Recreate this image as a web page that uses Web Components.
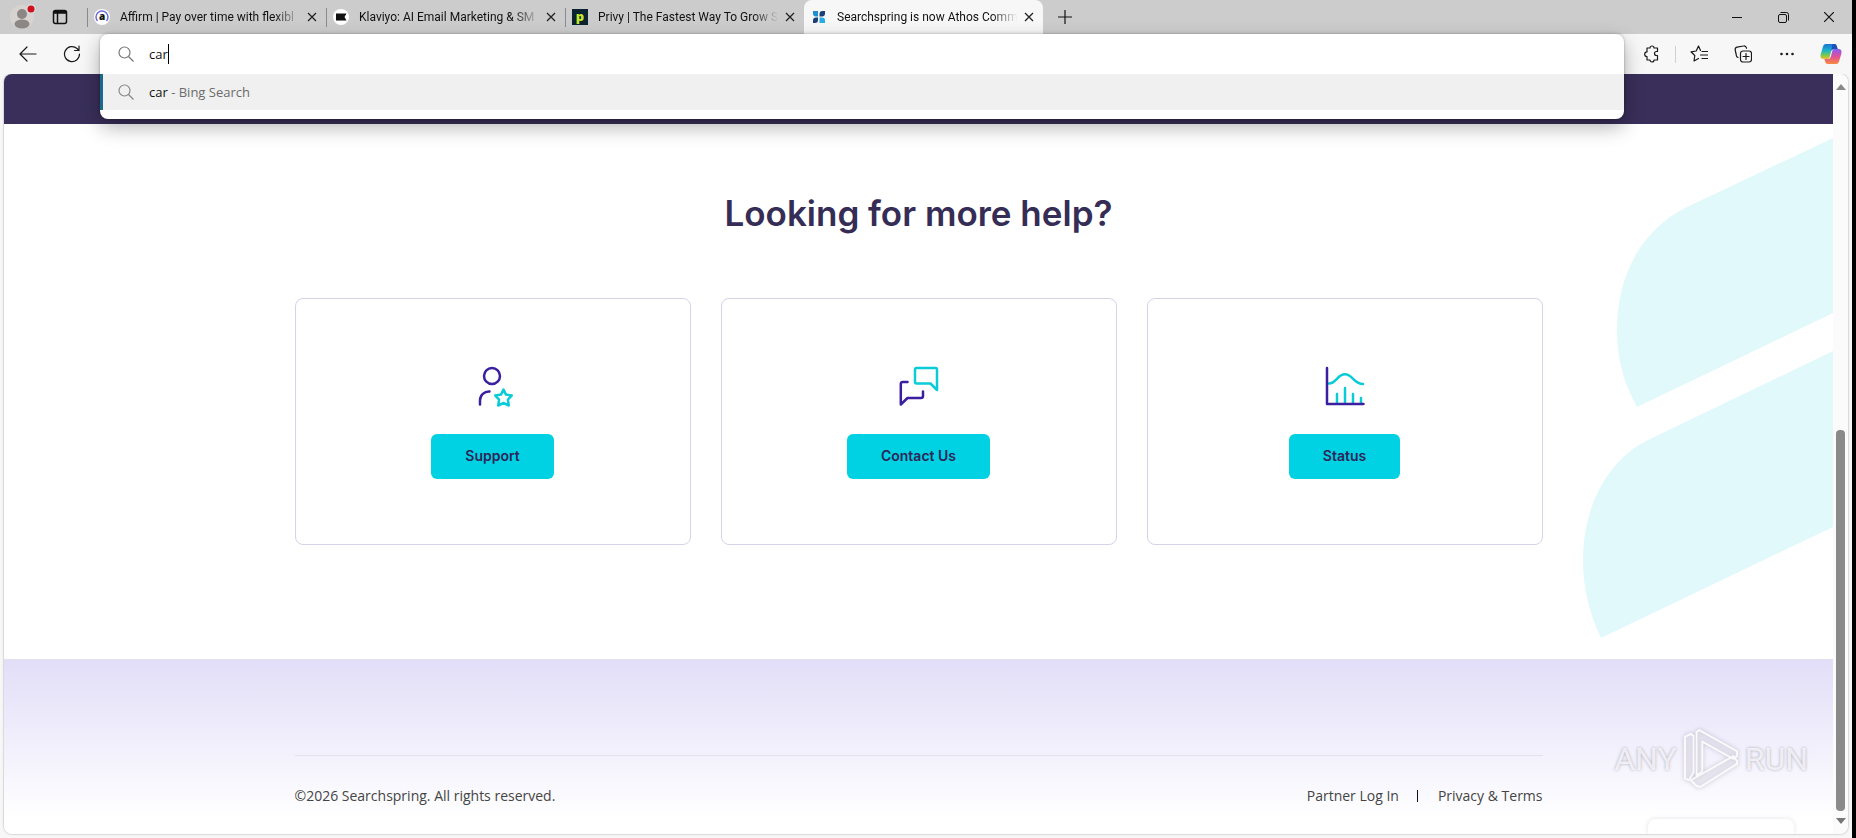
<!DOCTYPE html>
<html lang="en">
<head>
<meta charset="utf-8">
<title>Searchspring is now Athos Commerce</title>
<style>
html,body{height:100%}
body{margin:0;background:#000;font-family:"Open Sans","Noto Sans",sans-serif}
</style>
</head>
<body>
<browser-window></browser-window>
<script>
const define=(name,markup)=>{
  const t=document.createElement('template');
  t.innerHTML=markup;
  customElements.define(name,class extends HTMLElement{
    connectedCallback(){
      if(this.shadowRoot)return;
      this.attachShadow({mode:'open'}).append(t.content.cloneNode(true));
    }
  });
};

define('browser-tab',`
<style>
:host{display:flex;align-items:center;box-sizing:border-box;width:239px;height:34px;padding:0 8px 0 7px;position:relative;flex:none}
:host([active]){background:#f7f7f7;border-radius:8px 8px 0 0}
:host(:not([active]))::before{content:"";position:absolute;left:0;top:8px;width:1px;height:19px;background:#8a8a8a}
.title{flex:1;min-width:0;margin:0 2px 0 10px;overflow:hidden;white-space:nowrap;font:12px/20px Roboto,sans-serif;color:#111;-webkit-mask-image:linear-gradient(90deg,#000 84%,transparent 98%);mask-image:linear-gradient(90deg,#000 84%,transparent 98%)}
button{border:0;background:none;padding:0;width:12px;height:20px;display:flex;align-items:center;justify-content:center;color:#222}
::slotted(svg){width:16px;height:16px;flex:none;display:block}
</style>
<slot name="icon"></slot><span class="title"><slot></slot></span>
<button aria-label="Close tab"><svg width="10" height="10" viewBox="0 0 10 10" stroke="currentColor" stroke-width="1.3"><path d="M1 1l8 8M9 1L1 9"/></svg></button>`);

define('tab-strip',`
<style>
:host{display:flex;align-items:center;height:34px;background:#cccccc;flex:none}
button{border:0;background:none;padding:0;display:flex;align-items:center;justify-content:center;height:34px;color:#111;flex:none}
.profile{width:44px}.panel{width:32px;margin-right:11px}.add{width:44px}
.win{width:46px}
.space{flex:1}
</style>
<button class="profile" aria-label="Profile"><svg width="30" height="30" viewBox="0 0 30 30"><circle cx="15" cy="15" r="12" fill="#d6d3d0"/><circle cx="15" cy="12" r="5" fill="#8c8784"/><ellipse cx="15" cy="22" rx="7.500" ry="4.500" fill="#8c8784"/><circle cx="24" cy="7" r="5" fill="#d8d8d8"/><circle cx="24" cy="7" r="3.500" fill="#d0101c"/></svg></button>
<button class="panel" aria-label="Tab actions"><svg width="16" height="16" viewBox="0 0 16 16" fill="none" stroke="currentColor" stroke-width="1.500"><rect x="1.500" y="1.500" width="13" height="13" rx="2"/><path d="M1.500 4h13M5.500 4v10" /><path d="M2 3h12" stroke-width="2"/></svg></button>
<browser-tab><svg slot="icon" viewBox="0 0 16 16"><circle cx="8" cy="8" r="8" fill="#fff"/><path d="M3.500 12A6 6 0 1 1 12.500 12" fill="none" stroke="#6a68d8" stroke-width="1.500"/><text x="8" y="11" text-anchor="middle" font-family="Open Sans" font-size="10" font-weight="800" fill="#111">a</text></svg>Affirm | Pay over time with flexibl</browser-tab>
<browser-tab><svg slot="icon" viewBox="0 0 16 16"><circle cx="8" cy="8" r="8" fill="#fff"/><path d="M3 4.500h10.500L11.500 8l2 3.500H3z" fill="#111"/></svg>Klaviyo: AI Email Marketing &amp; SM</browser-tab>
<browser-tab><svg slot="icon" viewBox="0 0 16 16"><rect width="16" height="16" fill="#0c2330"/><text x="8" y="11.500" text-anchor="middle" font-family="Open Sans" font-size="13" font-weight="800" fill="#c5e82c">p</text></svg>Privy | The Fastest Way To Grow S</browser-tab>
<browser-tab active><svg slot="icon" viewBox="0 0 16 16"><path d="M2 2h5v5.500H5A3 3 0 0 1 2 4.500z" fill="#1e8fd0"/><path d="M8.500 7.500V5a3 3 0 0 1 3-3H14v2.500a3 3 0 0 1-3 3z" fill="#1c3f78"/><path d="M7 8.500v2.500a3 3 0 0 1-3 3H2v-2.500a3 3 0 0 1 3-3z" fill="#1c3f78"/><path d="M8.500 8.500H11a3 3 0 0 1 3 3V14H8.500z" fill="#25aee4"/></svg>Searchspring is now Athos Comm</browser-tab>
<button class="add" aria-label="New tab"><svg width="14" height="14" viewBox="0 0 14 14" stroke="currentColor" stroke-width="1.200"><path d="M7 0v14M0 7h14"/></svg></button>
<span class="space"></span>
<button class="win" aria-label="Minimize"><svg width="10" height="10" viewBox="0 0 10 10" stroke="currentColor"><path d="M0 5.500h10"/></svg></button>
<button class="win" aria-label="Restore"><svg width="11" height="11" viewBox="0 0 11 11" fill="none" stroke="currentColor"><rect x=".5" y="2.500" width="8" height="8" rx="1.500"/><path d="M2.500.5H8.500a2 2 0 0 1 2 2v6"/></svg></button>
<button class="win" aria-label="Close"><svg width="10" height="10" viewBox="0 0 10 10" stroke="currentColor" stroke-width="1.200"><path d="M0 0l10 10M10 0L0 10"/></svg></button>`);

define('address-box',`
<style>
:host{display:block;position:relative;flex:1;height:40px;min-width:0}
.pop{position:absolute;z-index:2;top:0;left:0;right:0;height:85px;background:#fff;border-radius:8px;box-shadow:0 8px 20px rgba(0,0,0,.3),0 0 3px rgba(0,0,0,.3)}
.row{display:flex;align-items:center;gap:15px;padding-left:18px;font-size:13px;line-height:20px;color:#111}
.query{height:40px}
.hit{height:36px;background:#f0f0f0;box-shadow:inset 3px 0 #1a6a8c}
svg{flex:none}
input{border:0;padding:0;margin:0;outline:0;background:none;font:inherit;color:inherit;field-sizing:content}
.entry{display:flex;align-items:center}
.caret{width:1px;height:20px;background:#000}
.dim{color:#6b6b6b}
</style>
<div class="pop">
<div class="row query"><svg width="16" height="16" viewBox="0 0 16 16" fill="none" stroke="#777" stroke-width="1.200"><circle cx="6.500" cy="6.500" r="5.500"/><path d="M10.500 10.500L15.500 15.500"/></svg><span class="entry"><input aria-label="Search or enter web address" value="car"><span class="caret"></span></span></div>
<div class="row hit"><svg width="16" height="16" viewBox="0 0 16 16" fill="none" stroke="#888" stroke-width="1.200"><circle cx="6.500" cy="6.500" r="5.500"/><path d="M10.500 10.500L15.500 15.500"/></svg><span>car <span class="dim">- Bing Search</span></span></div>
</div>`);

define('tool-bar',`
<style>
:host{display:flex;align-items:center;height:40px;background:#f7f7f7;padding-left:6px;flex:none}
button{border:0;background:none;padding:0;width:44px;height:40px;display:flex;align-items:center;justify-content:center;color:#1a1a1a;flex:none}
svg{fill:none;stroke:currentColor;stroke-width:1.200;stroke-linecap:round;stroke-linejoin:round}
address-box{margin:0 6px}
.sep{width:1px;height:17px;background:#d0d0d0;margin:0 1px}
.copilot{width:43px}
</style>
<button aria-label="Back"><svg width="18" height="18" viewBox="0 0 18 18"><path d="M17 9H1M8 2L1 9l7 7"/></svg></button>
<button aria-label="Refresh"><svg width="18" height="18" viewBox="0 0 18 18"><path d="M16.500 9A7.500 7.500 0 1 1 14 3.500L16 5.500M16 1v4.500h-4.500"/></svg></button>
<address-box></address-box>
<button aria-label="Extensions"><svg width="18" height="18" viewBox="0 0 18 18"><path d="M4 3h3a2 2 0 0 1 4 0h3.500v3.500h-1a2 2 0 0 0 0 4h1V15H11a2 2 0 0 1-4 0H4v-3.500a2.300 2.300 0 0 1 0-4.600z"/></svg></button>
<span class="sep"></span>
<button aria-label="Favorites"><svg width="18" height="18" viewBox="0 0 18 18"><path d="M10.500 5.500L8.500 1 6.200 6 1 6.800l3.800 3.700L4 16l4.500-2.500M12 6.500h5.500M10.500 10H17.500M12 13.500h5.500"/></svg></button>
<button aria-label="Collections"><svg width="18" height="18" viewBox="0 0 18 18"><rect x="6.500" y="6" width="11" height="11" rx="2.500"/><path d="M12 8.500v6M9 11.500h6M4 12.500A2.500 2.500 0 0 1 2.500 11L1.200 5A2.500 2.500 0 0 1 3 2.200L9.500 1A2.500 2.500 0 0 1 12.500 3.200"/></svg></button>
<button aria-label="Settings and more"><svg width="16" height="16" viewBox="0 0 16 16"><g fill="currentColor" stroke="none"><circle cx="2.500" cy="8" r="1.300"/><circle cx="8" cy="8" r="1.300"/><circle cx="13.500" cy="8" r="1.300"/></g></svg></button>
<button class="copilot" aria-label="Copilot"><svg width="22" height="22" viewBox="0 0 22 22"><defs><linearGradient id="g1" x1="0" y1="0" x2="0" y2="1"><stop offset="0" stop-color="#1673d6"/><stop offset=".45" stop-color="#1fb5c9"/><stop offset=".75" stop-color="#78c850"/><stop offset="1" stop-color="#f0c020"/></linearGradient><linearGradient id="g2" x1="0" y1="0" x2="0" y2="1"><stop offset="0" stop-color="#8a5cf0"/><stop offset=".5" stop-color="#e0509a"/><stop offset="1" stop-color="#f98a3c"/></linearGradient></defs><g stroke="none"><path d="M6 1h8c2 0 2.500 1 3 3l.6 2h-3.300c-2 0-2.800 1-3.300 3l-1.300 5c-.4 1.500-1.200 2-2.700 2H3.500C1 16 0 14 .6 11.500L3 3.500C3.600 1.800 4.500 1 6 1z" fill="url(#g1)"/><path d="M12.500 1H14c2 0 2.500 1 3 3l.6 2h-3.300c-1.500 0-2.500.5-3 2z" fill="#1f4fb8"/><path d="M16 21H8c-2 0-2.500-1-3-3l-.6-2h3.300c2 0 2.800-1 3.300-3l1.300-5c.4-1.500 1.200-2 2.700-2h3.500c2.500 0 3.500 2 2.900 4.500L19 18.500c-.6 1.700-1.500 2.500-3 2.500z" fill="url(#g2)"/></g></svg></button>`);

define('help-card',`
<style>
:host{display:flex;flex-direction:column;align-items:center;gap:28px;flex:1;box-sizing:border-box;border:1px solid #d5d3ea;border-radius:8px;padding:67px 0 65px;background:#fff}
::slotted(svg){width:40px;height:40px;display:block}
a{display:block;box-sizing:border-box;height:45px;padding:0 34px;border-radius:6px;background:#00d1e3;color:#2d2558;font:600 14px/44px Inter,sans-serif;text-decoration:none}
</style>
<slot name="icon"></slot><a href="#"><slot></slot></a>`);

define('help-section',`
<style>
:host{display:block;position:relative;background:#fff;padding:67px 24px 114px}
.leaves{position:absolute;top:0;right:0}
h2{margin:0 0 63px;text-align:center;font:600 35px/44px Inter,sans-serif;color:#352d56}
.cards{position:relative;display:flex;gap:30px;max-width:1248px;margin:0 auto}
svg.i{fill:none;stroke-width:2.500;stroke-linecap:round;stroke-linejoin:round}
.p{stroke:#3a1fa0}.c{stroke:#0acbd8}
</style>
<svg class="leaves" width="260" height="535" viewBox="0 0 260 535" fill="#e2f9fb" aria-hidden="true"><path d="M260 14L114 83C67 106 44 153 44 206C44 235 51 260 64 283L260 189Z"/><path d="M260 227L77 315C33 336 10 384 10 437C10 465 17 491 28 514L260 403Z"/></svg>
<h2>Looking for more help?</h2>
<div class="cards">
<help-card><svg class="i" slot="icon" viewBox="0 0 40 40" overflow="visible"><circle class="p" cx="19" cy="10" r="8"/><path class="p" d="M7 38.500V34.500A9 9 0 0 1 16.500 25.500"/><path class="c" d="M30.500 23.500L33 28.600L38.800 29.500L34.900 33.600L35.800 39.500L30.500 37L25.200 39.500L26.100 33.600L22.200 29.500L28 28.600Z"/></svg>Support</help-card>
<help-card><svg class="i" slot="icon" viewBox="0 0 40 40" overflow="visible"><path class="c" d="M17.500 2H36.500A1.500 1.500 0 0 1 38 3.500V24L31.500 17.500H17.500A1.500 1.500 0 0 1 16 16V3.500A1.500 1.500 0 0 1 17.500 2Z"/><path class="p" d="M8.500 16H3.700A1.800 1.800 0 0 0 1.800 17.800V38.500L8.500 32H22A2 2 0 0 0 24 30V25.500"/></svg>Contact Us</help-card>
<help-card><svg class="i" slot="icon" viewBox="0 0 40 40" overflow="visible"><path class="c" d="M4 17.500C11 17.500 12.500 8.300 20 8.300S29 18 38 18M12 28v9M20 22v15M28 28v9M36 32v5"/><path class="p" d="M2 2V38H38.500"/></svg>Status</help-card>
</div>`);

define('site-footer',`
<style>
:host{display:block;flex:1;background:linear-gradient(#e2def8,#fff 160px);border-top:1px solid #e2e0ee;box-sizing:border-box;padding:95px 24px 0}
.in{max-width:1248px;margin:0 auto;border-top:1px solid #e3e1ee;padding-top:28px;display:flex;justify-content:space-between;font:14px/24px "Open Sans",sans-serif;color:#444}
nav{display:flex;align-items:center}
a{color:inherit;text-decoration:none}
.bar{width:1px;height:12px;background:#111;margin:0 20px 0 18px}
</style>
<div class="in"><span>©2026 Searchspring. All rights reserved.</span><nav><a href="#">Partner Log In</a><span class="bar"></span><a href="#">Privacy &amp; Terms</a></nav></div>`);

define('scroll-rail',`
<style>
:host{display:flex;flex-direction:column;align-items:center;width:15px;box-sizing:border-box;padding:10px 0;background:#fbfbfb;flex:none}
svg{display:block;flex:none}
.space{flex:340}
.thumb{flex:381;width:9px;border-radius:4px;background:#8a8a8a;margin-bottom:7px}
</style>
<svg width="10" height="6"><path d="M5 0l5 6H0z" fill="#888"/></svg><div class="space"></div><div class="thumb"></div><svg width="10" height="6"><path d="M0 0h10L5 6z" fill="#777"/></svg>`);

define('water-mark',`
<style>
:host{position:absolute;right:25px;bottom:44px;display:flex;align-items:center;gap:6px;font:32px/52px Roboto,sans-serif;color:rgba(255,255,255,.75);text-shadow:0 0 3px rgba(120,115,140,.6);pointer-events:none}
svg{filter:drop-shadow(0 0 2px rgba(120,115,140,.5));overflow:visible}
</style>
<span>ANY</span><svg width="56" height="62" viewBox="0 0 58 62" fill="rgba(240,239,246,.35)" stroke="rgba(255,255,255,.85)" stroke-width="2" stroke-linejoin="round"><path d="M2 8L8 5L11 7V45L6 53L2 51Z"/><path d="M14 3L17 1L56 23V28L52 31L20 13V44L14 48Z"/><path d="M8 53L52 28L56 33V36L18 60L14 59Z"/></svg><span>RUN</span>`);

define('web-view',`
<style>
:host{display:flex;flex:1;min-height:0;margin:0 4px 4px;border-radius:8px;overflow:hidden;background:#fff;box-shadow:0 0 2px rgba(0,0,0,.4)}
main{flex:1;min-width:0;display:flex;flex-direction:column;overflow:hidden;position:relative}
.band{height:50px;background:#392f5a;flex:none}
help-section{flex:none}
.widget{position:absolute;right:39px;bottom:0;width:146px;height:15px;border-radius:8px 8px 0 0;background:#fff;box-shadow:0 0 5px rgba(60,50,100,.14)}
</style>
<main><div class="band"></div><help-section></help-section><site-footer></site-footer><div class="widget"></div><water-mark></water-mark></main><scroll-rail></scroll-rail>`);

define('browser-window',`
<style>
:host{display:flex;flex-direction:column;height:100vh;margin-right:4px;background:#f7f7f7}
tool-bar{position:relative;z-index:2}
</style>
<tab-strip></tab-strip><tool-bar></tool-bar><web-view></web-view>`);
</script>
</body>
</html>
